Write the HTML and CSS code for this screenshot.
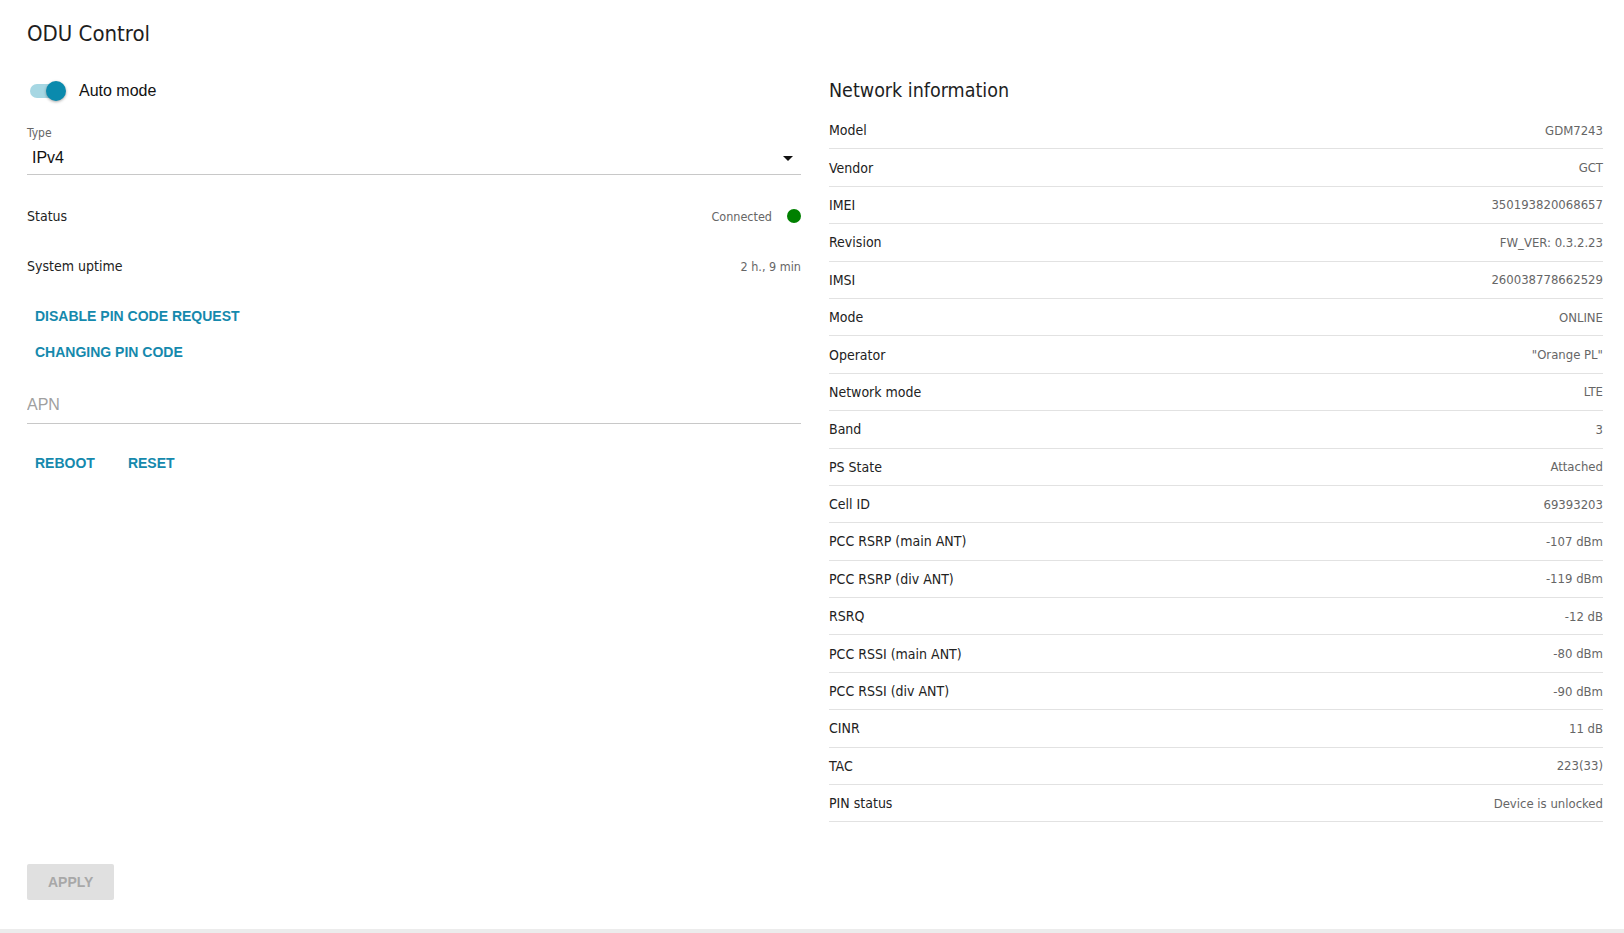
FILE: index.html
```html
<!DOCTYPE html>
<html lang="en">
<head>
    <meta charset="UTF-8">
    <meta name="viewport" content="width=device-width, initial-scale=1.0">
    <title>ODU Control</title>
    <link rel="stylesheet" href="styles.css">
</head>
<body>
    <div class="page">
        <h1 class="page-title">ODU Control</h1>

        <div class="columns">
            <div class="settings">
                <label class="switch-row">
                    <span class="switch on"><span class="knob"></span></span>
                    <span class="switch-label">Auto mode</span>
                </label>

                <div class="field select-field">
                    <div class="field-label">Type</div>
                    <div class="field-value">
                        <span>IPv4</span>
                        <span class="caret"></span>
                    </div>
                </div>

                <div class="info-row">
                    <span class="info-name">Status</span>
                    <span class="info-value">Connected <span class="dot"></span></span>
                </div>
                <div class="info-row">
                    <span class="info-name">System uptime</span>
                    <span class="info-value">2 h., 9 min</span>
                </div>

                <div class="links">
                    <button class="flat-btn">Disable PIN code request</button>
                    <button class="flat-btn">Changing PIN code</button>
                </div>

                <div class="field text-field">
                    <input type="text" placeholder="APN">
                </div>

                <div class="actions">
                    <button class="flat-btn">Reboot</button>
                    <button class="flat-btn">Reset</button>
                </div>
            </div>

            <div class="network">
                <h2 class="net-title">Network information</h2>
                <div class="net-table" id="netTable"></div>
            </div>
        </div>

        <button class="apply-btn" disabled>Apply</button>
    </div>

    <script>
        const netInfo = [
            ['Model', 'GDM7243'],
            ['Vendor', 'GCT'],
            ['IMEI', '350193820068657'],
            ['Revision', 'FW_VER: 0.3.2.23'],
            ['IMSI', '260038778662529'],
            ['Mode', 'ONLINE'],
            ['Operator', '"Orange PL"'],
            ['Network mode', 'LTE'],
            ['Band', '3'],
            ['PS State', 'Attached'],
            ['Cell ID', '69393203'],
            ['PCC RSRP (main ANT)', '-107 dBm'],
            ['PCC RSRP (div ANT)', '-119 dBm'],
            ['RSRQ', '-12 dB'],
            ['PCC RSSI (main ANT)', '-80 dBm'],
            ['PCC RSSI (div ANT)', '-90 dBm'],
            ['CINR', '11 dB'],
            ['TAC', '223(33)'],
            ['PIN status', 'Device is unlocked']
        ];

        const table = document.getElementById('netTable');
        netInfo.forEach(([name, value]) => {
            const row = document.createElement('div');
            row.className = 'net-row';
            row.innerHTML = `<span class="net-name"></span><span class="net-value"></span>`;
            row.querySelector('.net-name').textContent = name;
            row.querySelector('.net-value').textContent = value;
            table.appendChild(row);
        });
    </script>
</body>
</html>
```

FILE: styles.css
```css
body {
    font-family: "DejaVu Sans Condensed", "DejaVu Sans", sans-serif;
    font-stretch: condensed;
    margin: 0;
    padding: 0;
    background-color: #ececec;
    color: #222;
}

.page {
    background: #fff;
    padding: 19px 21px 29px 27px;
    box-shadow: 0 1px 4px rgba(0, 0, 0, 0.3);
}

.page-title {
    margin: 0 0 22px;
    font-size: 22px;
    line-height: 30px;
    font-weight: normal;
    color: #1e1e1e;
}

.columns {
    display: grid;
    grid-template-columns: 1fr 1fr;
    grid-gap: 28px;
    align-items: start;
}

/* left side: switch, selects, links */
.switch-row {
    display: flex;
    align-items: center;
    height: 40px;
    cursor: pointer;
}

.switch {
    position: relative;
    width: 34px;
    height: 14px;
    margin-left: 3px;
    border-radius: 7px;
    background-color: #a6d7e3;
}

.switch .knob {
    position: absolute;
    top: -3px;
    left: 16px;
    width: 20px;
    height: 20px;
    border-radius: 50%;
    background-color: #0a8aad;
    box-shadow: 0 1px 3px rgba(0, 0, 0, 0.35);
}

.switch-label {
    margin-left: 15px;
    font-family: "Liberation Sans", Arial, sans-serif;
    font-size: 16px;
    color: #111;
}

.field {
    border-bottom: 1px solid #c8c8c8;
}

.select-field {
    margin-top: 14px;
    padding-bottom: 4px;
}

.field-label {
    font-size: 12px;
    line-height: 16px;
    color: #666;
}

.field-value {
    display: flex;
    justify-content: space-between;
    align-items: center;
    margin-top: 5px;
    padding: 0 8px 0 5px;
    height: 24px;
    font-family: "Liberation Sans", Arial, sans-serif;
    font-size: 16px;
    color: #111;
}

.caret {
    width: 0;
    height: 0;
    border-left: 5px solid transparent;
    border-right: 5px solid transparent;
    border-top: 5px solid #111;
}

.info-row {
    display: flex;
    justify-content: space-between;
    align-items: center;
    height: 50px;
    font-size: 14px;
}

.select-field + .info-row {
    margin-top: 16px;
}

.info-value {
    display: flex;
    align-items: center;
    font-size: 12.5px;
    color: #666;
}

.dot {
    width: 14px;
    height: 14px;
    margin-left: 15px;
    border-radius: 50%;
    background-color: #008000;
}

.links {
    display: flex;
    flex-direction: column;
    align-items: flex-start;
    margin-top: 7px;
}

.flat-btn {
    height: 36px;
    padding: 0 8px;
    border: none;
    background: none;
    font-family: "Liberation Sans", Arial, sans-serif;
    font-size: 14px;
    font-weight: bold;
    text-transform: uppercase;
    color: #1589ad;
    cursor: pointer;
}

.text-field {
    margin-top: 23px;
    padding-bottom: 6px;
}

.text-field input {
    display: block;
    width: 100%;
    height: 24px;
    padding: 0;
    border: none;
    outline: none;
    font-family: "Liberation Sans", Arial, sans-serif;
    font-size: 16px;
}

.text-field input::placeholder {
    color: #a0a0a0;
}

.actions {
    display: flex;
    gap: 17px;
    margin-top: 21px;
}

/* right side: network table */
.net-title {
    margin: 0 0 2px;
    font-size: 19.5px;
    line-height: 39px;
    font-weight: normal;
    color: #1e1e1e;
}

.net-row {
    display: flex;
    justify-content: space-between;
    align-items: center;
    box-sizing: border-box;
    height: 37.4px;
    border-bottom: 1px solid #e2e2e2;
}

.net-name {
    font-size: 14px;
}

.net-value {
    font-size: 13px;
    color: #666;
}

.apply-btn {
    display: block;
    margin-top: 42px;
    height: 36px;
    padding: 0 21px;
    border: none;
    border-radius: 2px;
    background-color: #e0e0e0;
    font-family: "Liberation Sans", Arial, sans-serif;
    font-size: 14px;
    font-weight: bold;
    text-transform: uppercase;
    color: #a8a8a8;
}
```
